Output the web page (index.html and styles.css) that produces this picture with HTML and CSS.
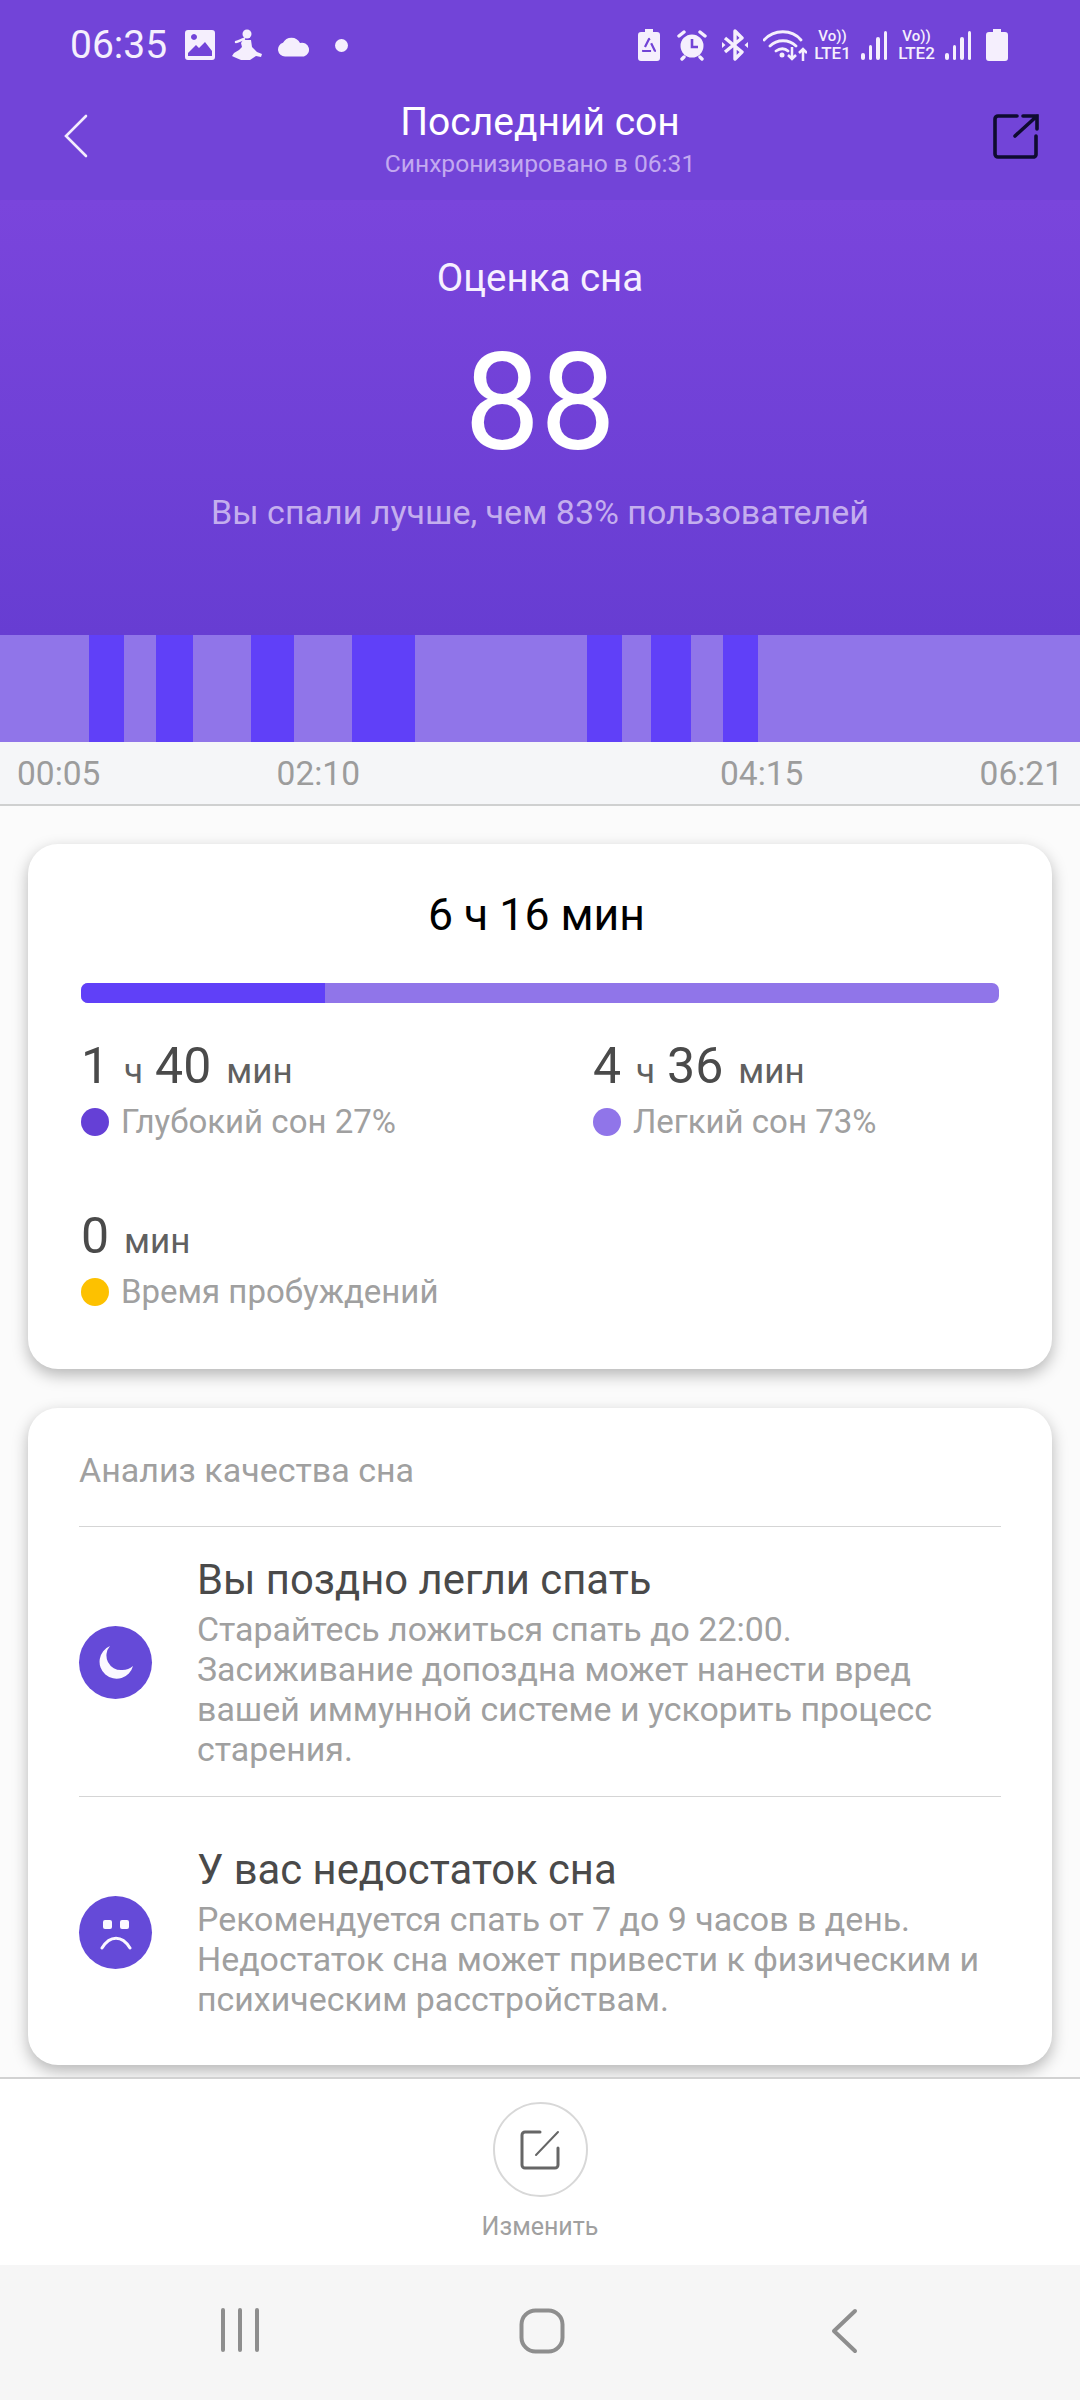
FILE: index.html
```html
<!DOCTYPE html>
<html lang="ru">
<head>
<meta charset="utf-8">
<title>Последний сон</title>
<link rel="stylesheet" href="styles.css">
</head>
<body>
<div class="page">
  <header class="top">
    <div class="status">
      <div class="status-group">
        <span class="clock">06:35</span>
        <svg class="ic" width="32" height="32" viewBox="0 0 32 32"><path fill="#f5effd" fill-rule="evenodd" d="M4 1h24a3 3 0 0 1 3 3v24a3 3 0 0 1-3 3H4a3 3 0 0 1-3-3V4a3 3 0 0 1 3-3zM4 24v3h24v-5l-7-9-6 6-3-3zM10 5a3 3 0 1 0 .01 0z"/></svg>
        <svg class="ic" width="30" height="32" viewBox="0 0 30 32"><circle cx="15" cy="5" r="4.500" fill="#f5effd"/><path fill="none" stroke="#f5effd" stroke-width="2.500" stroke-linecap="round" d="M12 10C9 11 6 13 4 13"/><path fill="#f5effd" d="M11 11h8l1 7 5 5 5 2-1 3-5-1-6 4H9l-7-3-2-1 2-3 5-3 3-3-1-4z"/></svg>
        <svg class="ic" width="33" height="23" viewBox="0 0 33 23"><path fill="#f5effd" d="M7 22.500a7 7 0 0 1-2-13.700A9.500 9.500 0 0 1 22 9a6.800 6.800 0 1 1 4 13.500z"/></svg>
        <span class="dot-small"></span>
      </div>
      <div class="status-group right">
        <svg class="ic" width="22" height="32" viewBox="0 0 22 32"><path fill="#f5effd" d="M7 0h8v3h4a3 3 0 0 1 3 3v23a3 3 0 0 1-3 3H3a3 3 0 0 1-3-3V6a3 3 0 0 1 3-3h4z"/><path fill="none" stroke="#7143d6" stroke-width="2.200" stroke-linejoin="round" stroke-dasharray="9 3.500" d="M11 10l-6 12h12z"/></svg>
        <svg class="ic m17" width="30" height="32" viewBox="0 0 30 32"><circle cx="15" cy="17" r="11.500" fill="#f5effd"/><path stroke="#f5effd" stroke-width="3.400" stroke-linecap="round" d="M2 7l5-4M28 7l-5-4M7 28l-2 2M23 28l2 2"/><path fill="none" stroke="#7143d6" stroke-width="2.600" d="M15 10v8h6"/></svg>
        <svg class="ic m15" width="26" height="32" viewBox="0 0 26 32"><path fill="none" stroke="#f5effd" stroke-width="3.400" stroke-linejoin="round" d="M3 9l17 14-7 7V2l7 7L3 23"/><path fill="#f5effd" d="M0 13l3.500 3L0 19zM26 13l-3.500 3 3.500 3z"/></svg>
        <svg class="ic m15" width="44" height="32" viewBox="0 0 44 32"><path fill="none" stroke="#f5effd" stroke-width="2.800" stroke-linecap="round" d="M1 11C11 0 29 0 38 11M7 17c7-7 19-7 26 0M13 22c4-3 9-3 12 0"/><circle cx="19" cy="26" r="2.500" fill="#f5effd"/><path fill="none" stroke="#f5effd" stroke-width="2.500" d="M29 18v12M25 26l4 4 4-4M40 32V20M36 24l4-4 4 4"/></svg>
        <div class="volte m6"><span class="vo">Vo))</span><span class="lte">LTE1</span></div>
        <div class="signal m9"><i class="s1"></i><i class="s2"></i><i class="s3"></i><i class="s4"></i></div>
        <div class="volte m9"><span class="vo">Vo))</span><span class="lte">LTE2</span></div>
        <div class="signal m9"><i class="s1"></i><i class="s2"></i><i class="s3"></i><i class="s4"></i></div>
        <svg class="ic m14" width="22" height="32" viewBox="0 0 22 32"><path fill="#f5effd" d="M7 0h8v3h4a3 3 0 0 1 3 3v23a3 3 0 0 1-3 3H3a3 3 0 0 1-3-3V6a3 3 0 0 1 3-3h4z"/></svg>
      </div>
    </div>
    <div class="bar">
      <svg class="back" width="24" height="44" viewBox="0 0 24 44"><path fill="none" stroke="#f3ecfd" stroke-width="2.600" stroke-linecap="round" d="M22 2L2 22l20 20"/></svg>
      <div class="bar-title">
        <div class="title">Последний сон</div>
        <div class="subtitle">Синхронизировано в 06:31</div>
      </div>
      <svg class="share" width="46" height="46" viewBox="0 0 46 46"><path fill="none" stroke="#0e0b30" stroke-width="3.600" stroke-linecap="round" d="M24 3H5a3 3 0 0 0-3 3v35a3 3 0 0 0 3 3h36a3 3 0 0 0 2-3V23M22 23L44 3M30 3h14v13"/></svg>
    </div>
  </header>

  <section class="hero">
    <div class="hero-label">Оценка сна</div>
    <div class="hero-score">88</div>
    <div class="hero-note">Вы спали лучше, чем 83% пользователей</div>
  </section>

  <div class="chart">
    <i class="seg" style="width:89px"></i><i class="seg deep" style="width:35px"></i>
    <i class="seg" style="width:32px"></i><i class="seg deep" style="width:37px"></i>
    <i class="seg" style="width:58px"></i><i class="seg deep" style="width:43px"></i>
    <i class="seg" style="width:58px"></i><i class="seg deep" style="width:63px"></i>
    <i class="seg" style="width:172px"></i><i class="seg deep" style="width:35px"></i>
    <i class="seg" style="width:29px"></i><i class="seg deep" style="width:40px"></i>
    <i class="seg" style="width:32px"></i><i class="seg deep" style="width:35px"></i>
    <i class="seg fill"></i>
  </div>
  <div class="times">
    <div class="times-half"><span>00:05</span><span>02:10</span></div>
    <div class="times-half"><span>04:15</span><span>06:21</span></div>
  </div>

  <main class="content">
    <section class="card summary">
      <div class="total">6 ч 16 мин</div>
      <div class="progress"><div class="progress-deep" style="width:244px"></div></div>
      <div class="stats">
        <div class="stat">
          <div class="value"><b>1</b> <small>ч</small> <b>40</b> <small>мин</small></div>
          <div class="legend"><span class="dot d1"></span>Глубокий сон 27%</div>
        </div>
        <div class="stat">
          <div class="value"><b>4</b> <small>ч</small> <b>36</b> <small>мин</small></div>
          <div class="legend"><span class="dot d2"></span>Легкий сон 73%</div>
        </div>
        <div class="stat">
          <div class="value"><b>0</b> <small>мин</small></div>
          <div class="legend"><span class="dot d3"></span>Время пробуждений</div>
        </div>
      </div>
    </section>

    <section class="card analysis">
      <div class="analysis-title">Анализ качества сна</div>
      <div class="row first">
        <div class="row-icon">
          <svg width="36" height="36" viewBox="0 0 36 36"><path fill="#fbf8ff" d="M12 1A17 17 0 1 0 35 21 16 16 0 0 1 24 25 14.500 14.500 0 0 1 12 1z"/></svg>
        </div>
        <div class="row-text">
          <div class="row-head">Вы поздно легли спать</div>
          <div class="row-desc">Старайтесь ложиться спать до 22:00. Засиживание допоздна может нанести вред вашей иммунной системе и ускорить процесс старения.</div>
        </div>
      </div>
      <div class="row second">
        <div class="row-icon">
          <svg width="32" height="36" viewBox="0 0 32 36"><rect x="3" y="5" width="9" height="9" rx="2" fill="#fbf8ff"/><rect x="20" y="5" width="9" height="9" rx="2" fill="#fbf8ff"/><path fill="none" stroke="#fbf8ff" stroke-width="3" stroke-linecap="round" d="M2 33c8-13 20-13 28 0"/></svg>
        </div>
        <div class="row-text">
          <div class="row-head">У вас недостаток сна</div>
          <div class="row-desc">Рекомендуется спать от 7 до 9 часов в день. Недостаток сна может привести к физическим и психическим расстройствам.</div>
        </div>
      </div>
    </section>
  </main>

  <footer class="actions">
    <div class="edit-btn">
      <svg width="40" height="40" viewBox="0 0 40 40"><path fill="none" stroke="#666" stroke-width="3" stroke-linecap="round" d="M20 2H5a3 3 0 0 0-3 3v30a3 3 0 0 0 3 3h30a3 3 0 0 0 3-3V18"/><path fill="none" stroke="#666" stroke-width="2" stroke-linecap="round" d="M38 2L16 25"/></svg>
    </div>
    <div class="edit-label">Изменить</div>
  </footer>

  <nav class="nav">
    <svg width="40" height="44" viewBox="0 0 40 44"><path stroke="#8e8e8e" stroke-width="4" stroke-linecap="round" d="M3 2v40M20 2v40M37 2v40"/></svg>
    <svg class="home" width="46" height="46" viewBox="0 0 46 46"><rect x="2.500" y="2.500" width="41" height="41" rx="14" fill="none" stroke="#8e8e8e" stroke-width="4"/></svg>
    <svg width="28" height="46" viewBox="0 0 28 46"><path fill="none" stroke="#8e8e8e" stroke-width="4" stroke-linecap="round" stroke-linejoin="round" d="M25 3L4 23l21 20"/></svg>
  </nav>
</div>
</body>
</html>
```

FILE: styles.css
```css
* { box-sizing: border-box; }
html, body { margin: 0; padding: 0; }
body { font-family: Roboto, "Noto Sans", sans-serif; background: #fbfbfb; }
.page { width: 1080px; height: 2400px; display: flex; flex-direction: column; overflow: hidden; }

.top { height: 200px; background: #7244d8; flex: none; }
.status { height: 90px; display: flex; justify-content: space-between; align-items: center; padding: 0 72px 0 70px; }
.status-group { display: flex; align-items: center; gap: 16px; }
.status-group.right { gap: 0; }
.m6 { margin-left: 6px; }
.m9 { margin-left: 9px; }
.m14 { margin-left: 14px; }
.m15 { margin-left: 15px; }
.m17 { margin-left: 17px; }
.clock { font-size: 39px; color: #f5effd; width: 98px; letter-spacing: 0; }
.ic { display: block; flex: none; }
.dot-small { width: 13px; height: 13px; border-radius: 50%; background: #f5effd; margin-left: 8px; }
.volte { display: flex; flex-direction: column; align-items: center; color: #f5effd; width: 39px; line-height: 15px; }
.vo { font-size: 15px; font-weight: 500; }
.lte { font-size: 17px; font-weight: 500; line-height: 18px; }
.signal { display: flex; align-items: flex-end; gap: 4px; height: 30px; width: 27px; }
.signal i { display: block; width: 3.500px; background: #f5effd; border-radius: 2px; }
.s1 { height: 7px; }
.s2 { height: 15px; }
.s3 { height: 23px; }
.s4 { height: 29px; }

.bar { height: 110px; display: grid; grid-template-columns: 1fr auto 1fr; align-items: center; padding: 0 41px 18px; }
.back { display: block; margin-left: 23px; }
.share { justify-self: end; display: block; }
.bar-title { text-align: center; padding-top: 10px; }
.title { font-size: 39px; line-height: 44px; color: #fff; }
.subtitle { font-size: 24.600px; line-height: 36px; margin-top: 2px; color: #c3a9f0; }

.hero { height: 435px; flex: none; background: linear-gradient(180deg, #7a45dc 0%, #673dd2 100%); padding-top: 56px; text-align: center; }
.hero-label { font-size: 38.500px; line-height: 44px; color: #f6f0ff; }
.hero-score { font-size: 135px; line-height: 150px; margin-top: 28px; color: #fff; }
.hero-note { font-size: 34px; line-height: 44px; margin-top: 12px; color: #c4aeee; }

.chart { height: 107px; flex: none; display: flex; }
.seg { display: block; height: 100%; background: #9075e9; flex: none; }
.seg.deep { background: #6040f8; }
.seg.fill { flex: 1; }

.times { height: 64px; flex: none; background: #f5f6f8; border-bottom: 2px solid #cfd0d0; display: flex; justify-content: space-between; align-items: center; padding: 0 17px; font-size: 33.500px; color: #9c9c9c; }
.times-half { width: 343px; display: flex; justify-content: space-between; }

.content { height: 1271px; flex: none; padding: 38px 28px 0; display: flex; flex-direction: column; gap: 39px; background: #fbfbfb; overflow: hidden; }
.card { background: #fff; border-radius: 30px; box-shadow: 0 6px 16px rgba(0,0,0,.28); flex: none; }

.summary { height: 525px; padding: 46px 53px 0; }
.total { font-size: 44.600px; line-height: 50px; text-align: center; color: #000; padding-right: 7px; }
.progress { height: 20px; margin-top: 43px; border-radius: 7px; background: #9075e9; overflow: hidden; }
.progress-deep { height: 100%; background: #6040f8; }
.stats { display: grid; grid-template-columns: 512px 1fr; row-gap: 64px; margin-top: 33px; }
.value { height: 60px; line-height: 60px; color: #4a4a4a; white-space: nowrap; }
.value b { font-weight: 400; font-size: 50px; }
.value small { font-size: 35px; color: #606060; margin: 0 8px 0 11px; }
.legend { display: flex; align-items: center; font-size: 33px; line-height: 40px; color: #a0a0a0; margin-top: 6px; }
.dot { width: 28px; height: 28px; border-radius: 50%; margin-right: 12px; flex: none; }
.d1 { background: #6540d6; }
.d2 { background: #9075e9; }
.d3 { background: #fdc100; }

.analysis { padding: 42px 51px 0; height: 657px; }
.analysis-title { font-size: 34px; line-height: 40px; color: #a0a0a0; padding-bottom: 36px; border-bottom: 1px solid #d5d5d5; }
.row { display: flex; align-items: center; gap: 45px; }
.row.first { padding: 28px 0 26px; border-bottom: 1px solid #d5d5d5; }
.row.second { padding: 48px 0 45px; }
.row-icon { width: 73px; height: 73px; border-radius: 50%; background: #654ad8; flex: none; display: flex; align-items: center; justify-content: center; }
.row-text { flex: 1; min-width: 0; }
.row-head { font-size: 41.800px; line-height: 50px; color: #4a4a4a; }
.row-desc { font-size: 33.900px; line-height: 40px; margin-top: 5px; color: #a0a0a0; }

.actions { height: 188px; flex: none; background: #fff; border-top: 2px solid #d2d2d2; display: flex; flex-direction: column; align-items: center; padding-top: 23px; }
.edit-btn { width: 95px; height: 95px; border-radius: 50%; border: 2px solid #d8d8d8; display: flex; align-items: center; justify-content: center; }
.edit-label { font-size: 25px; line-height: 30px; margin-top: 15px; color: #a0a0a0; }

.nav { flex: 1; background: #f6f6f6; display: flex; justify-content: space-between; align-items: flex-start; padding: 43px 222px 0 220px; }
.nav svg { display: block; }
.nav .home { margin-right: 6px; }
```
